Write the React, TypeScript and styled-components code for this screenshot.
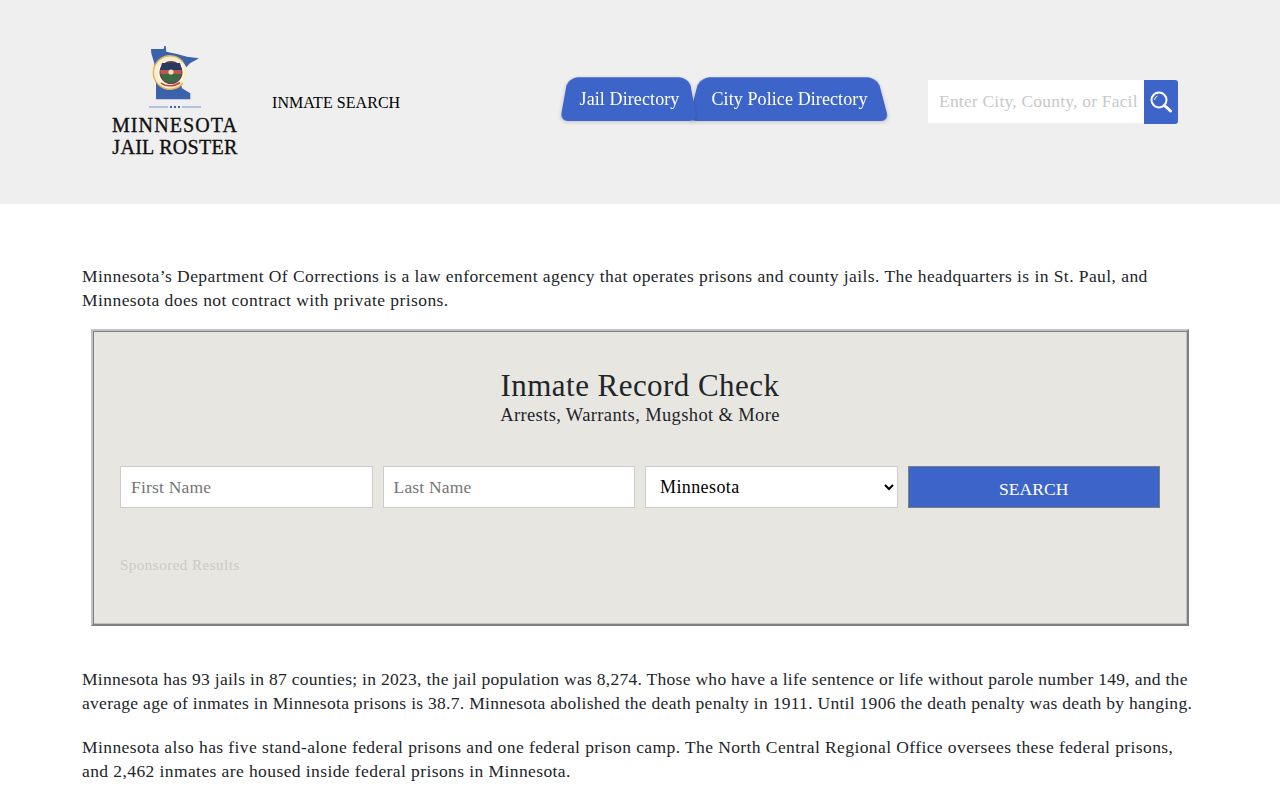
import React from "react";
import styled, { createGlobalStyle } from "styled-components";

const Global = createGlobalStyle`
  html, body { margin: 0; padding: 0; background: #fff; height: 800px; overflow: hidden; }
  body { font-family: "Liberation Serif", "Times New Roman", serif; color: #212529; }
  * { box-sizing: border-box; }
`;

const Header = styled.header`
  height: 204px;
  background: #efefef;
  display: flex;
  align-items: center;
  padding: 0 102px 0 112px;
`;
const Logo = styled.div`
  width: 126px;
  display: flex;
  flex-direction: column;
  align-items: center;
`;
const LogoLine = styled.div<{ $s: number }>`
  font-size: 20px;
  line-height: 22px;
  color: #111;
  white-space: nowrap;
  letter-spacing: ${(p) => p.$s}px;
  -webkit-text-stroke: 0.35px #111;
  text-align: center;
`;
const InmateLink = styled.a`
  font-size: 16px;
  letter-spacing: 0.05px;
  color: #000;
  margin-left: 34px;
  margin-top: 2px;
  width: 288px;
  white-space: nowrap;
`;
const Tabs = styled.nav`
  display: flex;
  margin-top: -6px;
`;
const Tab = styled.a<{ $w: number }>`
  position: relative;
  width: ${(p) => p.$w}px;
  height: 44px;
  padding-left: 2px;
  display: flex;
  align-items: center;
  justify-content: center;
  color: #fff;
  font-size: 18px;
  letter-spacing: 0.1px;
  white-space: nowrap;
  &:first-child {
    z-index: 1;
    margin-right: -9px;
  }
  &::before {
    content: "";
    position: absolute;
    left: 0;
    right: 0;
    bottom: 0;
    top: -6px;
    background: #3d65c9;
    border-radius: 12px 12px 8px 8px;
    box-shadow: 0 1px 4px rgba(0, 0, 0, 0.2);
    transform: perspective(60px) rotateX(9deg);
    transform-origin: bottom;
  }
`;
const TabLabel = styled.span`
  position: relative;
`;
const Search = styled.form`
  display: flex;
  margin-left: 39px;
`;
const SearchInput = styled.input`
  width: 216px;
  height: 43px;
  border: 0;
  background: #fff;
  padding: 0 6px 0 11px;
  font: 17.5px "Liberation Serif", serif;
  letter-spacing: 0.2px;
  outline: none;
  &::placeholder { color: #c8c8c8; opacity: 1; }
`;
const SearchButton = styled.button`
  width: 34px;
  height: 44px;
  border: 0;
  padding: 0;
  background: #3d65c9;
  border-radius: 0 3px 3px 0;
  display: flex;
  align-items: center;
  justify-content: center;
`;
const Main = styled.main`
  padding: 60px 82px 0;
`;
const Para = styled.p<{ $s: number }>`
  margin: 0 0 20px;
  font-size: 17.5px;
  line-height: 24px;
  letter-spacing: ${(p) => p.$s}px;
  color: #212529;
  width: 1116px;
`;
const Panel = styled.section`
  width: 1098px;
  height: 297px;
  margin: -3px 0 41px 9px;
  border: 2px solid;
  border-color: #c2c2c2 #808080 #808080 #c2c2c2;
  box-shadow: inset 1px 1px 0 #808080, inset -1px -1px 0 #c2c2c2;
  background: #e8e6e1;
  padding: 37px 27px 0;
`;
const Title = styled.h2`
  margin: 0;
  font-size: 31px;
  line-height: 36px;
  font-weight: 400;
  text-align: center;
  letter-spacing: 0.45px;
`;
const Subtitle = styled.div`
  font-size: 18.5px;
  line-height: 22px;
  text-align: center;
  letter-spacing: 0.37px;
`;
const FormRow = styled.form`
  display: grid;
  grid-template-columns: repeat(4, 1fr);
  gap: 10px;
  margin-top: 40px;
`;
const Field = styled.input`
  height: 42px;
  border: 1px solid #ccc;
  background: #fff;
  padding: 0 10px;
  font: 17.5px "Liberation Serif", serif;
  letter-spacing: 0.2px;
  width: 100%;
  &::placeholder { color: #757575; opacity: 1; }
`;
const Select = styled.select`
  height: 42px;
  border: 1px solid #ccc;
  background: #fff;
  padding: 0 10px;
  font: 18px "Liberation Serif", serif;
  letter-spacing: 0.4px;
  color: #000;
  width: 100%;
`;
const SubmitButton = styled.button`
  height: 42px;
  border: 1px solid #7d7d7d;
  background: #3d65c9;
  color: #fff;
  font: 17.5px "Liberation Serif", serif;
  letter-spacing: 0.1px;
  padding: 5px 0 0;
`;
const Sponsored = styled.div`
  margin-top: 48px;
  font-size: 15px;
  line-height: 19px;
  color: #cbcac6;
  letter-spacing: 0.5px;
`;

const MapLogo = () => (
  <svg width="48" height="54" viewBox="0 0 48 54">
    <path
      fill="#3d62ac"
      d="M0 3h12.7l.6-3h1.4l.6 5.7L26 8l10 2.7 12 1.6-9 5-8 8.4-1.7 8.3 1.7 8.3 8.3 5v6H5V37L2.7 27.3l.6-10L.3 7.3z"
    />
    <circle cx="19.3" cy="26.7" r="16.7" fill="#f7eecb" />
    <path d="M32 16a16.7 16.7 0 1 0 0 21" fill="none" stroke="#e3b458" strokeWidth="1.4" />
    <circle cx="20" cy="26.5" r="13" fill="#fff8e6" />
    <circle cx="20" cy="26.5" r="11.5" fill="#6d3a44" />
    <path fill="#2a3a62" d="M11 17h18l2 7H9z" />
    <path fill="#b8574c" d="M9 24h22l-.5 4h-21z" />
    <path fill="#3c6a44" d="M9.5 28h21l-3 6.5-7.5 3-7.5-3z" />
    <circle cx="20" cy="26" r="2.6" fill="#f1e3b4" />
    <path stroke="#c2463a" strokeWidth="1.6" fill="none" d="M10 37c4 3.5 13 4 19-.5" />
  </svg>
);

const DividerMark = styled.svg`
  margin: 4px 0;
  display: block;
`;

const Divider = () => (
  <DividerMark width="52" height="6" viewBox="0 0 52 6">
    <path stroke="#9fb2da" strokeWidth="1.5" d="M0 3h19M33 3h19" />
    <path stroke="#3d62ac" strokeWidth="2" strokeDasharray="2 2" d="M21 3h10" />
  </DividerMark>
);

const SearchIcon = () => (
  <svg width="24" height="24" viewBox="0 0 24 24" fill="none" stroke="#fff">
    <circle cx="10" cy="10" r="7.5" strokeWidth="2" />
    <path d="M15.5 15.5l6 5.5" strokeWidth="3" strokeLinecap="round" />
    <path d="M5.5 10a4.5 4.5 0 0 1 3-4" strokeWidth="1" />
  </svg>
);

export default function App() {
  return (
    <>
      <Global />
      <Header>
        <Logo>
          <MapLogo />
          <Divider />
          <LogoLine $s={1.1}>MINNESOTA</LogoLine>
          <LogoLine $s={0.3}>JAIL ROSTER</LogoLine>
        </Logo>
        <InmateLink>INMATE SEARCH</InmateLink>
        <Tabs>
          <Tab $w={137}>
            <TabLabel>Jail Directory</TabLabel>
          </Tab>
          <Tab $w={201}>
            <TabLabel>City Police Directory</TabLabel>
          </Tab>
        </Tabs>
        <Search>
          <SearchInput placeholder="Enter City, County, or Facility" />
          <SearchButton type="button" aria-label="Search">
            <SearchIcon />
          </SearchButton>
        </Search>
      </Header>
      <Main>
        <Para $s={0.43}>
          Minnesota’s Department Of Corrections is a law enforcement agency that operates prisons and county jails. The headquarters is in St. Paul, and Minnesota does not contract with private prisons.
        </Para>
        <Panel>
          <Title>Inmate Record Check</Title>
          <Subtitle>Arrests, Warrants, Mugshot &amp; More</Subtitle>
          <FormRow>
            <Field placeholder="First Name" />
            <Field placeholder="Last Name" />
            <Select defaultValue="Minnesota">
              <option>Minnesota</option>
            </Select>
            <SubmitButton type="button">SEARCH</SubmitButton>
          </FormRow>
          <Sponsored>Sponsored Results</Sponsored>
        </Panel>
        <Para $s={0.29}>
          Minnesota has 93 jails in 87 counties; in 2023, the jail population was 8,274. Those who have a life sentence or life without parole number 149, and the average age of inmates in Minnesota prisons is 38.7. Minnesota abolished the death penalty in 1911. Until 1906 the death penalty was death by hanging.
        </Para>
        <Para $s={0.41}>
          Minnesota also has five stand-alone federal prisons and one federal prison camp. The North Central Regional Office oversees these federal prisons, and 2,462 inmates are housed inside federal prisons in Minnesota.
        </Para>
      </Main>
    </>
  );
}
